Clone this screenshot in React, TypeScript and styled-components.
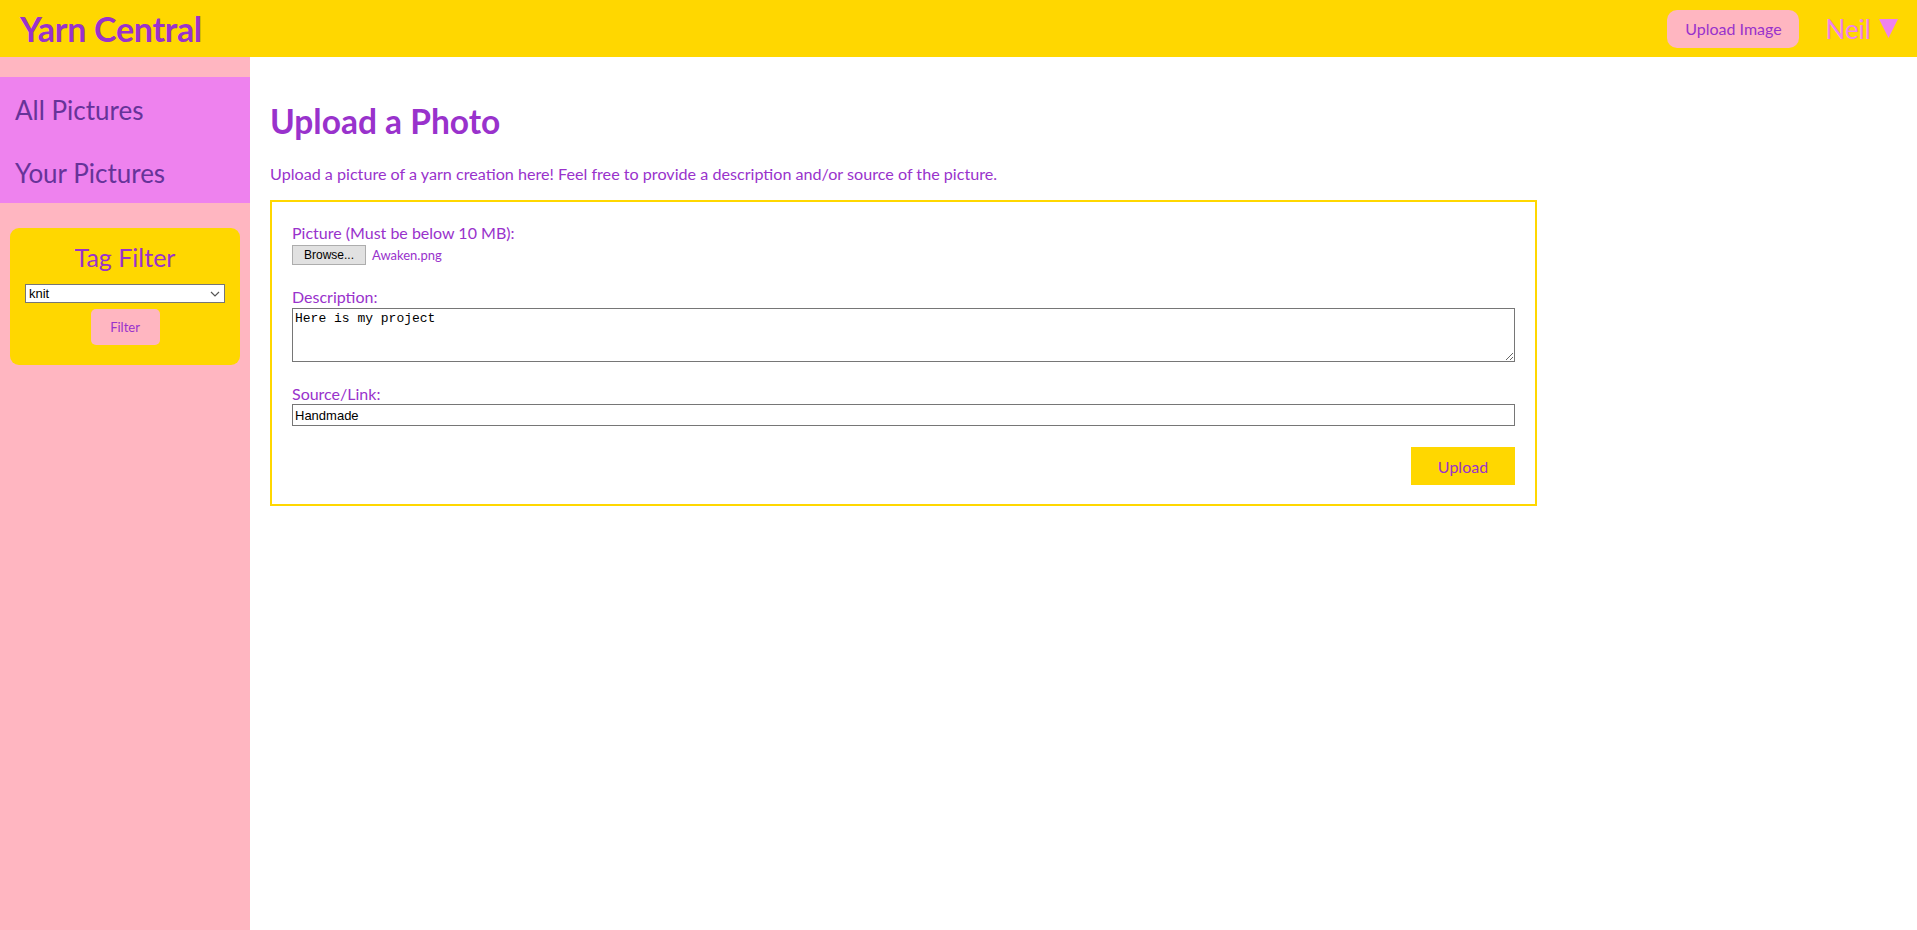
import React from "react";
import styled, { createGlobalStyle } from "styled-components";

const Global = createGlobalStyle`
  html, body { margin: 0; padding: 0; background: #ffffff; }
  body { font-family: "Lato", "Noto Sans", sans-serif; }
  * { box-sizing: border-box; }
`;

const Page = styled.div`
  display: flex;
  flex-direction: column;
  min-height: 100vh;
`;

const Header = styled.header`
  height: 57px;
  background: #ffd700;
  display: flex;
  align-items: center;
  justify-content: space-between;
  padding: 0 19px 0 20px;
`;

const Brand = styled.h1`
  margin: 0;
  font-size: 34px;
  font-weight: 700;
  color: #9932cc;
  letter-spacing: -0.3px;
`;

const HeaderRight = styled.div`
  display: flex;
  align-items: center;
  gap: 26px;
`;

const PinkButton = styled.button<{ $w: number; $h: number; $r: number; $size: number }>`
  width: ${(p) => p.$w}px;
  height: ${(p) => p.$h}px;
  border-radius: ${(p) => p.$r}px;
  background: #ffb6c1;
  color: #9932cc;
  border: none;
  font-family: inherit;
  font-size: ${(p) => p.$size}px;
  padding: 0;
  cursor: pointer;
`;

const UserMenu = styled.div`
  color: #ee82ee;
  font-size: 26px;
  display: flex;
  align-items: center;
  gap: 8px;
  svg { display: block; }
`;

const Body = styled.div`
  flex: 1;
  display: flex;
`;

const Sidebar = styled.aside`
  width: 250px;
  flex-shrink: 0;
  background: #ffb6c1;
  padding-top: 20px;
  display: flex;
  flex-direction: column;
`;

const Nav = styled.nav`
  background: #ee82ee;
  display: flex;
  flex-direction: column;
`;

const NavItem = styled.a`
  height: 63px;
  display: flex;
  align-items: center;
  padding-left: 15px;
  padding-top: 2px;
  font-size: 26px;
  color: #663399;
  text-decoration: none;
`;

const FilterCard = styled.div`
  margin: 25px 10px 0;
  background: #ffd700;
  border-radius: 9px;
  height: 137px;
  display: flex;
  flex-direction: column;
  align-items: center;
  padding-top: 12px;
`;

const FilterTitle = styled.div`
  font-size: 25px;
  color: #9932cc;
  line-height: 34px;
`;

const SelectWrap = styled.div`
  position: relative;
  margin-top: 10px;
  width: 200px;
  height: 19px;
`;

const Select = styled.select`
  appearance: none;
  display: block;
  width: 100%;
  height: 100%;
  font-family: "Liberation Sans", sans-serif;
  font-size: 13px;
  color: #000;
  border: 1px solid #767676;
  border-radius: 0;
  background: #ffffff;
  padding: 0 3px;
`;

const SelectChevron = styled.svg`
  position: absolute;
  right: 5px;
  top: 7px;
  pointer-events: none;
`;

const Main = styled.main`
  flex: 1;
  padding: 0 20px;
`;

const Title = styled.h2`
  margin: 42px 0 0;
  font-size: 33.5px;
  font-weight: 700;
  color: #9932cc;
  line-height: 44px;
`;

const Intro = styled.p`
  margin: 20px 0 0;
  font-size: 16.15px;
  color: #9932cc;
  line-height: 22px;
`;

const FormBox = styled.form`
  margin-top: 15px;
  width: 1267px;
  border: 2px solid #ffd700;
  padding: 20px 20px 19px;
  display: flex;
  flex-direction: column;
`;

const Label = styled.label<{ $top?: number }>`
  display: block;
  margin-top: ${(p) => p.$top ?? 0}px;
  font-size: 16px;
  line-height: 21px;
  color: #9932cc;
`;

const FileRow = styled.div`
  display: flex;
  align-items: center;
  gap: 6px;
  margin-top: 2px;
`;

const BrowseButton = styled.button`
  width: 74px;
  height: 20px;
  background: #e1e1e1;
  border: 1px solid #adadad;
  font-family: "Liberation Sans", sans-serif;
  font-size: 12px;
  color: #000;
  padding: 0;
`;

const FileName = styled.span`
  font-size: 13px;
  color: #9932cc;
`;

const TextArea = styled.textarea`
  display: block;
  width: 100%;
  height: 54px;
  border: 1px solid #767676;
  font-family: "Liberation Mono", monospace;
  font-size: 13px;
  padding: 2px;
  margin-top: 1px;
  resize: both;
`;

const TextInput = styled.input`
  display: block;
  width: 100%;
  height: 22px;
  border: 1px solid #767676;
  font-family: "Liberation Sans", sans-serif;
  font-size: 13px;
  padding: 1px 2px;
  margin-top: 0px;
`;

const Actions = styled.div`
  display: flex;
  justify-content: flex-end;
  margin-top: 21px;
`;

const SubmitButton = styled.button`
  width: 104px;
  height: 38px;
  background: #ffd700;
  border: none;
  color: #9932cc;
  font-family: inherit;
  font-size: 16px;
  padding: 0;
`;

export default function App() {
  return (
    <>
      <Global />
      <Page>
        <Header>
          <Brand>Yarn Central</Brand>
          <HeaderRight>
            <PinkButton $w={132} $h={38} $r={10} $size={16}>Upload Image</PinkButton>
            <UserMenu>
              <span>Neil</span>
              <svg width="19" height="19" viewBox="0 0 19 19" aria-hidden="true">
                <polygon points="0,0 19,0 9.5,19" fill="#ee82ee" />
              </svg>
            </UserMenu>
          </HeaderRight>
        </Header>
        <Body>
          <Sidebar>
            <Nav>
              <NavItem href="#">All Pictures</NavItem>
              <NavItem href="#">Your Pictures</NavItem>
            </Nav>
            <FilterCard>
              <FilterTitle>Tag Filter</FilterTitle>
              <SelectWrap>
                <Select defaultValue="knit">
                  <option value="knit">knit</option>
                  <option value="crochet">crochet</option>
                </Select>
                <SelectChevron width="10" height="6" viewBox="0 0 10 6" aria-hidden="true">
                  <polyline points="1,1 5,5 9,1" fill="none" stroke="#555" strokeWidth="1.2" />
                </SelectChevron>
              </SelectWrap>
              <PinkButton $w={69} $h={36} $r={5} $size={13} style={{ marginTop: 6 }}>
                Filter
              </PinkButton>
            </FilterCard>
          </Sidebar>
          <Main>
            <Title>Upload a Photo</Title>
            <Intro>
              Upload a picture of a yarn creation here! Feel free to provide a description and/or source of the picture.
            </Intro>
            <FormBox onSubmit={(e) => e.preventDefault()}>
              <Label>Picture (Must be below 10 MB):</Label>
              <FileRow>
                <BrowseButton type="button">Browse...</BrowseButton>
                <FileName>Awaken.png</FileName>
              </FileRow>
              <Label $top={21}>Description:</Label>
              <TextArea defaultValue="Here is my project" />
              <Label $top={21}>Source/Link:</Label>
              <TextInput defaultValue="Handmade" />
              <Actions>
                <SubmitButton type="submit">Upload</SubmitButton>
              </Actions>
            </FormBox>
          </Main>
        </Body>
      </Page>
    </>
  );
}
